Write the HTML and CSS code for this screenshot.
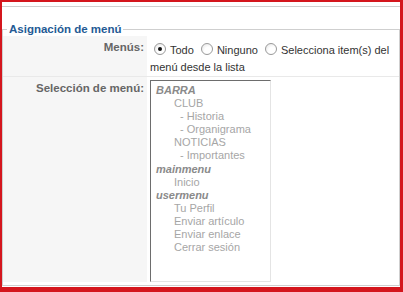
FILE: index.html
```html
<!DOCTYPE html>
<html lang="es">
<head>
  <meta charset="UTF-8">
  <title>Asignación de menú</title>
  <link rel="stylesheet" href="styles.css">
</head>
<body>
  <div class="frame">
    <div class="topbar"></div>

    <fieldset class="adminform">
      <legend>Asignación de menú</legend>

      <table class="admintable">
        <colgroup>
          <col class="col-key">
          <col>
        </colgroup>
        <tr class="row-menus">
          <td class="key">Menús:</td>
          <td class="val">
            <label class="opt"><span class="radio checked"></span>Todo</label>
            <label class="opt"><span class="radio"></span>Ninguno</label>
            <label class="opt"><span class="radio"></span>Selecciona item(s) del menú desde la lista</label>
          </td>
        </tr>
        <tr class="row-sel">
          <td class="key">Selección de menú:</td>
          <td class="val">
            <div class="listbox">
              <div class="group">BARRA</div>
              <div class="item l1">CLUB</div>
              <div class="item l2">- Historia</div>
              <div class="item l2">- Organigrama</div>
              <div class="item l1">NOTICIAS</div>
              <div class="item l2">- Importantes</div>
              <div class="group">mainmenu</div>
              <div class="item l1">Inicio</div>
              <div class="group">usermenu</div>
              <div class="item l1">Tu Perfil</div>
              <div class="item l1">Enviar artículo</div>
              <div class="item l1">Enviar enlace</div>
              <div class="item l1">Cerrar sesión</div>
            </div>
          </td>
        </tr>
      </table>
    </fieldset>
  </div>
</body>
</html>
```

FILE: styles.css
```css
body {
  margin: 0;
  font-family: 'Liberation Sans', Arial, sans-serif;
  font-size: 11px;
  color: #333;
  background: #fff;
}
.frame {
  height: 292px;
  box-sizing: border-box;
  border: solid #d4161d;
  border-width: 2px 3px 5px 2px;
  overflow: hidden;
}
.topbar {
  margin-top: 4px;
  border-top: 1px solid #cfcfcf;
}
.adminform {
  margin: 16px 0 0 0;
  padding: 1px 0 0 0;
  border: 1px solid #cfcfcf;
  height: 263px;
  box-sizing: border-box;
}
.adminform legend {
  margin-left: 4px;
  padding: 0 2px;
  color: #245a94;
  font-weight: bold;
  font-size: 11.5px;
}
.admintable {
  width: 100%;
  table-layout: fixed;
  border-collapse: collapse;
}
.col-key {
  width: 144px;
}
.admintable td {
  padding: 0;
  vertical-align: top;
}
.key {
  background: #f6f6f6;
  color: #666;
  font-weight: bold;
  font-size: 11.5px;
  line-height: 14px;
  text-align: right;
  padding-right: 3px !important;
}
.row-menus td {
  border-bottom: 1px solid #e9e9e9;
}
.row-menus .key {
  padding-top: 4px !important;
}
.row-menus .val {
  padding: 6px 2px 0 3px;
  line-height: 17px;
}
.row-sel .key {
  padding-top: 4px !important;
}
.row-sel .val {
  padding: 3px 0 0 3px;
}
.radio {
  display: inline-block;
  width: 10px;
  height: 10px;
  margin: 0 4px -1px 4px;
  border: 1px solid #9a9a9a;
  border-radius: 50%;
  background: radial-gradient(circle at 65% 70%, #fff 40%, #e2e2e2 100%);
  position: relative;
}
.radio.checked::after {
  content: "";
  position: absolute;
  left: 3px;
  top: 3px;
  width: 4px;
  height: 4px;
  border-radius: 50%;
  background: #111;
}
.listbox {
  width: 121px;
  height: 202px;
  border: 1px solid;
  border-color: #6d6d6d #e4e4e4 #e4e4e4 #6d6d6d;
  padding-top: 3px;
  box-sizing: border-box;
  color: #a6a6a6;
  line-height: 13.1px;
}
.group {
  padding-left: 5px;
  font-weight: bold;
  font-style: italic;
  color: #8a8a8a;
}
.item.l1 {
  padding-left: 23px;
}
.item.l2 {
  padding-left: 29px;
}
```
